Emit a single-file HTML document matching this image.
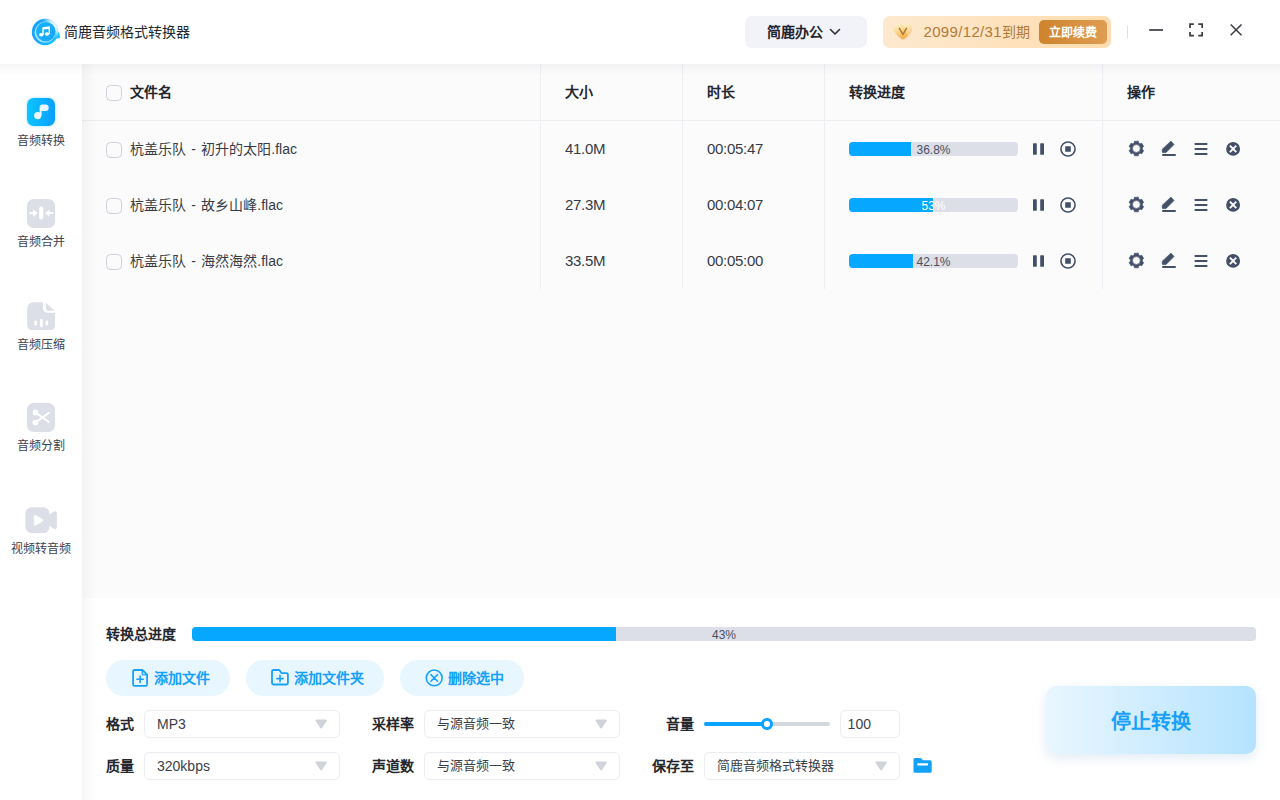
<!DOCTYPE html>
<html lang="zh-CN">
<head>
<meta charset="utf-8">
<title>简鹿音频格式转换器</title>
<style>
*{box-sizing:border-box;margin:0;padding:0}
html,body{width:1280px;height:800px;overflow:hidden;background:#fff}
body{font-family:"Liberation Sans",sans-serif;color:#2b2f36;font-size:14px;position:relative}
.abs{position:absolute}
/* title bar */
#titlebar{position:absolute;left:0;top:0;width:1280px;height:64px;background:#fff;z-index:5}
#logo{position:absolute;left:31px;top:18px;width:30px;height:28px}
#apptitle{position:absolute;left:64px;top:22px;font-size:14px;line-height:20px;color:#23272e;white-space:nowrap}
#office{position:absolute;left:745px;top:16px;width:122px;height:32px;border-radius:7px;background:#f2f3f9}
#office span{position:absolute;left:22px;top:6px;font-size:14px;line-height:20px;font-weight:bold;color:#1f2430;white-space:nowrap}
#office svg{position:absolute;left:84px;top:11px}
#vip{position:absolute;left:883px;top:16px;width:228px;height:32px;border-radius:7px;background:linear-gradient(90deg,#fde9cf 0%,#ffdcae 100%)}
#vip .date{position:absolute;left:40.5px;top:6px;font-size:14px;line-height:20px;color:#b27a38;white-space:nowrap}
#vip .date .n{font-size:15px;letter-spacing:.34px}
#vip .renew{position:absolute;left:156px;top:4px;width:68px;height:24px;border-radius:5px;background:linear-gradient(90deg,#cf832d,#de9d52);color:#fff;font-size:12px;font-weight:bold;line-height:26.6px;text-align:center;white-space:nowrap}
#vip svg{position:absolute;left:9px;top:6px}
#sep{position:absolute;left:1127px;top:26px;width:1px;height:12px;background:#dcdee3}
.winbtn{position:absolute;top:0}
#shT{position:absolute;left:0;top:64px;width:1280px;height:12px;z-index:6;background:linear-gradient(180deg,rgba(20,22,30,.038),rgba(20,22,30,.014) 50%,rgba(20,22,30,0))}
#shL{position:absolute;left:82px;top:64px;width:15px;height:736px;z-index:6;background:linear-gradient(90deg,rgba(20,22,30,.04),rgba(20,22,30,.015) 50%,rgba(20,22,30,0))}
/* sidebar */
#sidebar{position:absolute;left:0;top:64px;width:82px;height:736px;background:#fff;z-index:4}
.nav{position:absolute;left:0;width:82px;text-align:center;font-size:12px;line-height:16px;color:#3c4250;white-space:nowrap}
.nav .ic{position:absolute;left:26.7px;top:0;width:28.6px;height:28.6px;border-radius:6.5px;background:#dddfe8}
.nav .ic.f{background:none;border-radius:0}
.nav .lb{position:absolute;left:0;width:82px;top:35px}
.nav.on .ic{background:linear-gradient(90deg,#0dc6ff,#0a9eff);box-shadow:0 0 3px rgba(10,170,255,.45)}
/* main */
#main{position:absolute;left:82px;top:64px;width:1198px;height:534px;background:#fbfbfc}
.vline{position:absolute;top:0;width:1px;height:225px;background:#edeef3}
#thead{position:absolute;left:0;top:0;width:1198px;height:57px;border-bottom:1px solid #ecedf0}
.th{position:absolute;top:18px;font-size:14px;line-height:20px;font-weight:bold;color:#23262d;white-space:nowrap}
.row{position:absolute;left:0;width:1198px;height:56px}
.cb{position:absolute;left:24px;width:16px;height:16px;border:1px solid #cdd1db;border-radius:4.5px;background:transparent}
.td{position:absolute;top:18px;font-size:14px;line-height:20px;color:#363b45;white-space:nowrap}
.td.n{font-size:15px;letter-spacing:-.3px;top:17.6px}
.td.f{word-spacing:1.4px}
.prog{position:absolute;left:767px;top:21px;width:169px;height:14px;border-radius:4px;background:#dcdfe8;overflow:hidden}
.prog i{position:absolute;left:0;top:0;height:14px;background:#06a7ff}
.prog b{position:absolute;left:0;top:.8px;width:169px;height:14px;line-height:14px;text-align:center;font-size:12px;font-weight:normal;color:#4a5060}
.ico{position:absolute}
/* bottom */
#bottom{position:absolute;left:82px;top:600px;width:1198px;height:200px;background:#fff}
#bottom:before{content:"";position:absolute;left:0;top:-2px;width:1198px;height:2px;background:#fff}
#total-lb{position:absolute;left:24px;top:24px;font-size:14px;line-height:20px;font-weight:bold;color:#23262d;white-space:nowrap}
#total{position:absolute;left:110px;top:27px;width:1064px;height:14px;border-radius:4px;background:#dcdfe8;overflow:hidden}
#total i{position:absolute;left:0;top:0;width:424px;height:14px;background:#06a7ff}
#total b{position:absolute;left:0;top:.8px;width:1064px;height:14px;line-height:14px;text-align:center;font-size:12px;font-weight:normal;color:#4a5060}
.pill{position:absolute;top:60px;height:36px;border-radius:18px;background:#e8f6ff;color:#14a1fb;font-size:14px;font-weight:bold;line-height:36px;white-space:nowrap}
.pill span{position:absolute;top:0}
.pill svg{position:absolute}
.lbl{position:absolute;font-size:14px;line-height:20px;font-weight:bold;color:#23262d;white-space:nowrap}
.sel{position:absolute;height:28px;border:1px solid #ebedf2;border-radius:5.5px;background:#fff;font-size:13px;line-height:26px;color:#3a3f49;white-space:nowrap}
.sel span{position:absolute;left:12px;top:0}
.sel .l{font-size:14px}
.sel svg{position:absolute;right:11.8px;top:8.1px}
#stop{position:absolute;left:964px;top:86px;width:210px;height:68px;border-radius:10px;background:linear-gradient(90deg,#e9f6ff 0%,#b4e3ff 100%);box-shadow:0 4px 12px rgba(120,170,210,.22);color:#18a0fb;font-size:20px;font-weight:bold;line-height:72px;text-align:center;letter-spacing:0px}
</style>
</head>
<body>
<svg width="0" height="0" style="position:absolute">
<defs>
<linearGradient id="gLogo" x1="0" y1="0" x2="1" y2="1"><stop offset="0" stop-color="#12b4ff"/><stop offset="1" stop-color="#1aa6ff"/></linearGradient>
<linearGradient id="gRing" x1="0" y1="0" x2="1" y2="1"><stop offset="0" stop-color="#1a9dff"/><stop offset=".5" stop-color="#18a8ff"/><stop offset="1" stop-color="#10ccff"/></linearGradient>
<radialGradient id="gRingW" cx=".92" cy=".2" r=".55"><stop offset="0" stop-color="#fff" stop-opacity="1"/><stop offset=".45" stop-color="#fff" stop-opacity=".75"/><stop offset="1" stop-color="#fff" stop-opacity="0"/></radialGradient>
<linearGradient id="gDia" x1=".1" y1="0" x2=".6" y2="1"><stop offset="0" stop-color="#fff4d2"/><stop offset=".45" stop-color="#fbd88f"/><stop offset="1" stop-color="#f6a840"/></linearGradient>
<g id="rowicons" fill="#445068">
<rect x="1033" y="143.2" width="3.8" height="11.5" rx=".6"/><rect x="1040.2" y="143.2" width="3.8" height="11.5" rx=".6"/>
<circle cx="1068" cy="149" r="7.05" fill="none" stroke="#445068" stroke-width="1.6"/><rect x="1065.2" y="146.2" width="5.6" height="5.6" rx=".3"/>
<path transform="translate(1136.4 148.5)" fill-rule="evenodd" stroke="#445068" stroke-width=".6" stroke-linejoin="round" d="M-2.25 -5.56 L-1.97 -7.34 L1.97 -7.34 L2.25 -5.56 L3.69 -4.73 L5.37 -5.37 L7.34 -1.97 L5.94 -0.84 L5.94 0.84 L7.34 1.97 L5.37 5.37 L3.69 4.73 L2.25 5.56 L1.97 7.34 L-1.97 7.34 L-2.25 5.56 L-3.69 4.73 L-5.37 5.37 L-7.34 1.97 L-5.94 0.84 L-5.94 -0.84 L-7.34 -1.97 L-5.37 -5.37 L-3.69 -4.73Z M3.9 0 A3.9 3.9 0 1 0 -3.9 0 A3.9 3.9 0 1 0 3.9 0Z"/>
<path d="M1170.9 141.1 L1174.1 144.4 L1165.9 152.7 L1163 152.7 Q1162.2 152.7 1162.2 151.9 L1162.2 149.3 Z" stroke="#445068" stroke-width=".5" stroke-linejoin="round"/>
<rect x="1162.2" y="154" width="13.6" height="1.9" rx=".3"/>
<rect x="1194.6" y="143" width="12.8" height="2" rx=".5"/><rect x="1194.6" y="148" width="12.8" height="2" rx=".5"/><rect x="1194.6" y="153" width="12.8" height="2" rx=".5"/>
<circle cx="1233.1" cy="148.9" r="6.95"/>
<path d="M1229.9 145.7 L1236.3 152.1 M1236.3 145.7 L1229.9 152.1" stroke="#fff" stroke-width="1.9" fill="none"/>
</g>
<path id="dd" d="M1.5 1.5 H10.8 L6.15 8.5Z" fill="#d0d3da" stroke="#d0d3da" stroke-width="2" stroke-linejoin="round"/>
</defs>
</svg>
<div id="titlebar">
  <svg id="logo" viewBox="31 18 30 28">
<path d="M52 38 Q56 36.5 56.6 31.9 Q58.6 31.6 59.2 33.6 L60.2 37.4 Q56 39.8 52 38Z" fill="#12c6ff"/>
<circle cx="45" cy="32" r="13.2" fill="url(#gRing)"/>
<circle cx="45" cy="32" r="13.2" fill="url(#gRingW)"/>
<circle cx="45" cy="32.3" r="10.5" fill="#a8e3ff"/>
<circle cx="45.8" cy="31.7" r="9.7" fill="url(#gLogo)"/>
<g fill="#fff"><ellipse cx="41.3" cy="34.8" rx="2.2" ry="1.8"/><ellipse cx="46.9" cy="34" rx="2.2" ry="1.8"/>
<path d="M42.3 27.2 L50 26.2 L50 34 L48.6 34 L48.6 28.9 L43.7 29.6 L43.7 34.8 L42.3 34.8 Z"/></g>
</svg>
  <div id="apptitle">简鹿音频格式转换器</div>
  <div id="office"><span>简鹿办公</span><svg width="12" height="10" viewBox="0 0 12 10"><path d="M1.5 2.5 L6 7 L10.5 2.5" fill="none" stroke="#2a2f3a" stroke-width="1.6" stroke-linecap="round" stroke-linejoin="round"/></svg></div>
  <div id="vip"><svg width="22" height="20" viewBox="892 22 22 20"><path id="dsh" d="M897.6 23.7 H908.4 Q909.4 23.7 910 24.5 L912 27.4 Q912.7 28.6 912 29.9 Q909.8 34.8 904.2 38.8 Q902.9 39.7 901.6 38.8 Q896 34.8 893.9 29.9 Q893.2 28.6 893.9 27.4 L895.9 24.5 Q896.5 23.7 897.6 23.7Z" fill="#e9a85a" opacity=".28" transform="translate(0 .9)"/><path d="M897.6 23.7 H908.4 Q909.4 23.7 910 24.5 L912 27.4 Q912.7 28.6 912 29.9 Q909.8 34.8 904.2 38.8 Q902.9 39.7 901.6 38.8 Q896 34.8 893.9 29.9 Q893.2 28.6 893.9 27.4 L895.9 24.5 Q896.5 23.7 897.6 23.7Z" fill="url(#gDia)"/><path d="M902.9 23.7 H908.4 Q909.4 23.7 910 24.5 L912 27.4 Q912.7 28.6 912 29.9 Q910.6 32.8 908 35.4 Z" fill="#fff" opacity=".3"/><path d="M899.4 28.3 L902.8 34.5 L906.5 28.3" fill="none" stroke="#b47830" stroke-width="1.5" stroke-linecap="round" stroke-linejoin="round"/></svg><span class="date"><span class="n">2099/12/31</span>到期</span><span class="renew">立即续费</span></div>
  <div id="sep"></div>
  <svg class="winbtn" style="left:1140px;top:16px" width="112" height="28" viewBox="1140 16 112 28" fill="none" stroke="#3a3c42" stroke-width="1.7">
<path d="M1149.2 30 H1163"/>
<path d="M1190 28 V24.2 H1193.9 M1198.3 24.2 H1202.2 V28 M1202.2 31.9 V35.7 H1198.3 M1193.9 35.7 H1190 V31.9"/>
<path d="M1230.7 24.5 L1241.5 35.3 M1241.5 24.5 L1230.7 35.3" stroke-width="1.5"/>
</svg>
</div>
<div id="shT"></div><div id="shL"></div>
<div id="sidebar">
  <div class="nav on" style="top:33.5px"><svg class="ic" viewBox="0 0 28.6 28.6"><g fill="#fff" opacity=".92"><circle cx="10.7" cy="17.6" r="3.6"/><path d="M12.6 17.6 V9.4 Q12.6 6.5 15.6 6.5 H18.6 Q21.7 6.5 21.7 9.7 Q21.7 12.9 18.6 12.9 H14.6 V17.6 Z"/></g></svg><div class="lb">音频转换</div></div>
  <div class="nav" style="top:135.2px"><svg class="ic" viewBox="26.7 199.7 28.6 28.6" fill="#fff"><rect x="38.9" y="207.1" width="4.1" height="13" rx="2"/><path d="M29.2 212.7 H33 V209.9 L37.2 213.7 L33 217.6 V214.7 H29.2 Z"/><path d="M52.9 212.7 H49.1 V209.9 L44.9 213.7 L49.1 217.6 V214.7 H52.9 Z"/></svg><div class="lb">音频合并</div></div>
  <div class="nav" style="top:237.5px"><svg class="ic f" viewBox="26.7 301.5 28.6 28.6"><path d="M33.7 301.7 H42.6 V307 Q42.6 312.3 47.9 312.3 H55.1 V323.4 Q55.1 330.1 48.4 330.1 H33.7 Q26.9 330.1 26.9 323.4 V308.4 Q26.9 301.7 33.7 301.7Z" fill="#dddfe8"/><path d="M45.6 302.6 L54.6 310.3 H48.6 Q45.6 310.3 45.6 307.3Z" fill="#dddfe8"/><g stroke="#fff" stroke-width="2.6" stroke-linecap="round"><path d="M35.3 321.4 V323.7"/><path d="M41.1 319.6 V325.6"/><path d="M46.6 321.4 V323.7"/></g></svg><div class="lb">音频压缩</div></div>
  <div class="nav" style="top:339.2px"><svg class="ic" viewBox="26.7 403.7 28.6 28.6"><g fill="#fff"><circle cx="35.1" cy="413.1" r="2.85"/><circle cx="35.1" cy="423.2" r="2.85"/></g><path d="M35.1 413.1 L48.6 422.7 M35.1 423.2 L48.6 413.6" stroke="#fff" stroke-width="2" stroke-linecap="round"/></svg><div class="lb">音频分割</div></div>
  <div class="nav" style="top:441.5px"><svg class="ic f" style="left:25px;top:1.2px;width:32.4px;height:26.4px" viewBox="25 506.7 32.4 26.4"><rect x="25.4" y="506.9" width="24.1" height="25.9" rx="6.2" fill="#dddfe8"/><path d="M48.6 515 L53.2 511.6 Q56.9 509.6 56.9 513.4 V526.4 Q56.9 530.2 53.2 528.2 L48.6 524.8Z" fill="#dddfe8"/><path d="M35.2 515 Q34.2 514.4 34.2 516.2 V523.8 Q34.2 525.6 35.6 524.9 L42.4 520.9 Q43.6 520 42.4 519.1Z" fill="#fff" stroke="#fff" stroke-width=".8" stroke-linejoin="round"/></svg><div class="lb">视频转音频</div></div>
</div>
<div id="main">
  <div class="vline" style="left:458px"></div>
  <div class="vline" style="left:600px"></div>
  <div class="vline" style="left:742px"></div>
  <div class="vline" style="left:1020px"></div>
  <div id="thead">
    <div class="cb" style="top:21px"></div>
    <div class="th" style="left:48px">文件名</div>
    <div class="th" style="left:483px">大小</div>
    <div class="th" style="left:625px">时长</div>
    <div class="th" style="left:767px">转换进度</div>
    <div class="th" style="left:1045px">操作</div>
  </div>
  <div class="row" style="top:57px">
    <div class="cb" style="top:21px"></div>
    <div class="td f" style="left:48px">杭盖乐队 - 初升的太阳.flac</div>
    <div class="td n" style="left:483px">41.0M</div>
    <div class="td n" style="left:625px">00:05:47</div>
    <div class="prog"><i style="width:62px"></i><b>36.8%</b></div>
    <svg class="ico" style="left:948px;top:18px" width="215" height="20" viewBox="1030 139 215 20"><use href="#rowicons"/></svg>
  </div>
  <div class="row" style="top:113px">
    <div class="cb" style="top:21px"></div>
    <div class="td f" style="left:48px">杭盖乐队 - 故乡山峰.flac</div>
    <div class="td n" style="left:483px">27.3M</div>
    <div class="td n" style="left:625px">00:04:07</div>
    <div class="prog"><i style="width:84px"></i><b style="color:#fff">53%</b></div>
    <svg class="ico" style="left:948px;top:18px" width="215" height="20" viewBox="1030 139 215 20"><use href="#rowicons"/></svg>
  </div>
  <div class="row" style="top:169px">
    <div class="cb" style="top:21px"></div>
    <div class="td f" style="left:48px">杭盖乐队 - 海然海然.flac</div>
    <div class="td n" style="left:483px">33.5M</div>
    <div class="td n" style="left:625px">00:05:00</div>
    <div class="prog"><i style="width:64px"></i><b>42.1%</b></div>
    <svg class="ico" style="left:948px;top:18px" width="215" height="20" viewBox="1030 139 215 20"><use href="#rowicons"/></svg>
  </div>
</div>
<div id="bottom">
  <div id="total-lb">转换总进度</div>
  <div id="total"><i></i><b>43%</b></div>
  <div class="pill" style="left:24px;width:124px"><svg style="left:24px;top:7px" width="22" height="22" viewBox="130 667 22 22" fill="none" stroke="#17a2ff" stroke-width="1.8" stroke-linejoin="round" stroke-linecap="round"><path d="M134.6 670 H142.4 L147.1 674.7 V684.4 Q147.1 685.9 145.6 685.9 H134.6 Q133.1 685.9 133.1 684.4 V671.5 Q133.1 670 134.6 670Z"/><path d="M142.2 670.2 V673.6 Q142.2 674.9 143.5 674.9 H146.9" stroke-width="1.4"/><path d="M136.9 679.3 H143.3 M140.1 676.1 V682.5" stroke-width="1.6"/></svg><span style="left:48px">添加文件</span></div>
  <div class="pill" style="left:164px;width:138px"><svg style="left:23px;top:7px" width="22" height="22" viewBox="269 667 22 22" fill="none" stroke="#17a2ff" stroke-width="1.8" stroke-linejoin="round" stroke-linecap="round"><path d="M273.5 670 H278.6 Q279.4 670 279.9 670.7 L281.4 673.1 H286.4 Q287.9 673.1 287.9 674.6 V683 Q287.9 684.5 286.4 684.5 H273.5 Q272 684.5 272 683 V671.5 Q272 670 273.5 670Z"/><path d="M276.8 678.6 H283.2 M280 675.4 V681.8" stroke-width="1.6"/></svg><span style="left:48px">添加文件夹</span></div>
  <div class="pill" style="left:318px;width:124px"><svg style="left:23px;top:7px" width="22" height="22" viewBox="423 667 22 22" fill="none" stroke="#17a2ff" stroke-width="1.6" stroke-linecap="round"><circle cx="434.2" cy="677.9" r="7.9"/><path d="M430.9 674.6 L437.5 681.2 M437.5 674.6 L430.9 681.2" stroke-width="1.5"/></svg><span style="left:48px">删除选中</span></div>
  <div class="lbl" style="left:24px;top:114px">格式</div>
  <div class="sel" style="left:62px;top:110px;width:196px"><span class="l">MP3</span><svg width="12.3" height="10" viewBox="0 0 12.3 10"><use href="#dd"/></svg></div>
  <div class="lbl" style="left:24px;top:156px">质量</div>
  <div class="sel" style="left:62px;top:152px;width:196px"><span class="l">320kbps</span><svg width="12.3" height="10" viewBox="0 0 12.3 10"><use href="#dd"/></svg></div>
  <div class="lbl" style="left:290px;top:114px">采样率</div>
  <div class="sel" style="left:342px;top:110px;width:196px"><span>与源音频一致</span><svg width="12.3" height="10" viewBox="0 0 12.3 10"><use href="#dd"/></svg></div>
  <div class="lbl" style="left:290px;top:156px">声道数</div>
  <div class="sel" style="left:342px;top:152px;width:196px"><span>与源音频一致</span><svg width="12.3" height="10" viewBox="0 0 12.3 10"><use href="#dd"/></svg></div>
  <div class="lbl" style="left:584px;top:114px">音量</div>
  <div class="abs" style="left:622px;top:122px;width:126px;height:4px;border-radius:2px;background:#d3d6dc"></div>
  <div class="abs" style="left:622px;top:122px;width:64px;height:4px;border-radius:2px;background:#0aa3ff"></div>
  <div class="abs" style="left:679.2px;top:118.2px;width:11.6px;height:11.6px;border-radius:50%;background:#fff;border:3px solid #0aa3ff"></div>
  <div class="sel" style="left:758px;top:110px;width:60px"><span class="l" style="left:6.6px">100</span></div>
  <div class="lbl" style="left:570px;top:156px">保存至</div>
  <div class="sel" style="left:622px;top:152px;width:196px"><span>简鹿音频格式转换器</span><svg width="12.3" height="10" viewBox="0 0 12.3 10"><use href="#dd"/></svg></div>
  <svg class="abs" style="left:830px;top:156px" width="22" height="18" viewBox="912 756 22 18"><path d="M915 758 H920.2 Q921 758 921.5 758.6 L922.9 760.3 H930.2 Q931.7 760.3 931.7 761.8 V771.2 Q931.7 772.7 930.2 772.7 H915 Q913.5 772.7 913.5 771.2 V759.5 Q913.5 758 915 758Z" fill="#12a1f9"/><rect x="917.3" y="763.3" width="10.7" height="2.1" rx=".4" fill="#fff"/></svg>
  <div id="stop">停止转换</div>
</div>
</body>
</html>
